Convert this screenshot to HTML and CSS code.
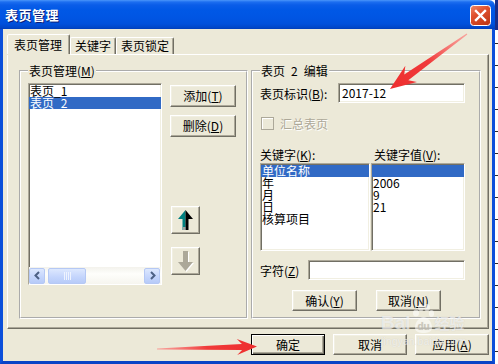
FILE: index.html
```html
<!DOCTYPE html>
<html lang="zh-CN">
<head>
<meta charset="utf-8">
<title>表页管理</title>
<link rel="stylesheet" href="styles.css">
</head>
<body>
<div class="screen">
  <div class="window">
    <div class="titlebar">
      <span class="title">表页管理</span>
      <span class="close">
        <svg width="21" height="21" viewBox="0 0 21 21">
          <defs>
            <linearGradient id="closeFill" x1="0" y1="0" x2="0.6" y2="1">
              <stop offset="0" stop-color="#F08A6A"/>
              <stop offset="0.45" stop-color="#E0512E"/>
              <stop offset="1" stop-color="#C23A17"/>
            </linearGradient>
          </defs>
          <rect x="0.5" y="0.5" width="20" height="20" rx="3" fill="url(#closeFill)" stroke="#fff"/>
          <path d="M6 6 L15 15 M15 6 L6 15" stroke="#fff" stroke-width="2.4" stroke-linecap="square"/>
        </svg>
      </span>
    </div>
    <div class="client">
      <div class="tabs">
        <div class="tab active">表页管理</div>
        <div class="tab">关键字</div>
        <div class="tab">表页锁定</div>
      </div>
      <div class="panel">
        <fieldset class="group group-left">
          <legend>表页管理(<u>M</u>)</legend>
          <div class="left-body">
            <div class="listbox sheets">
              <div class="items">
                <div class="item">表页_1</div>
                <div class="item sel">表页_2</div>
              </div>
              <div class="hscroll">
                <span class="sb-btn">
                  <svg width="9" height="9" viewBox="0 0 9 9"><path d="M6 1 L2.5 4.5 L6 8" fill="none" stroke="#4D6185" stroke-width="2"/></svg>
                </span>
                <span class="sb-thumb">
                  <svg width="9" height="8" viewBox="0 0 9 8"><path d="M1.5 0 V8 M3.5 0 V8 M5.5 0 V8 M7.5 0 V8" stroke="#EEF3FE" stroke-width="1"/></svg>
                </span>
                <span class="sb-track"></span>
                <span class="sb-btn">
                  <svg width="9" height="9" viewBox="0 0 9 9"><path d="M3 1 L6.5 4.5 L3 8" fill="none" stroke="#4D6185" stroke-width="2"/></svg>
                </span>
              </div>
            </div>
            <div class="side-buttons">
              <button class="btn btn-add">添加(<u>T</u>)</button>
              <button class="btn btn-del">删除(<u>D</u>)</button>
              <button class="btn btn-icon btn-up">
                <svg width="15" height="20" viewBox="0 0 15 20">
                  <polygon points="7.5,0 7.5,20 4.5,20 4.5,9 0,9" fill="#008080"/>
                  <polygon points="7.5,0 15,9 10.5,9 10.5,20 7.5,20" fill="#000"/>
                  <rect x="5" y="17" width="2.5" height="3" fill="#A0A0A0"/>
                </svg>
              </button>
              <button class="btn btn-icon btn-down">
                <svg width="16" height="21" viewBox="0 0 16 21">
                  <polygon points="6,1 11,1 11,12 16,12 8.5,21 1,12 6,12" fill="#fff"/>
                  <polygon points="5,0 10,0 10,11 15,11 7.5,20 0,11 5,11" fill="#ACA899"/>
                </svg>
              </button>
            </div>
          </div>
        </fieldset>

        <fieldset class="group group-right">
          <legend>表页&ensp;2&ensp;编辑</legend>
          <div class="row row-id">
            <span class="lbl lbl-id">表页标识(<u>B</u>):</span>
            <span class="field field-id">2017-12</span>
          </div>
          <div class="row row-check">
            <span class="checkbox"></span>
            <span class="disabled">汇总表页</span>
          </div>
          <div class="row row-heads">
            <span class="lbl lbl-key">关键字(<u>K</u>):</span>
            <span class="lbl">关键字值(<u>V</u>):</span>
          </div>
          <div class="row row-lists">
            <div class="listbox keys">
              <div class="item sel">单位名称</div>
              <div class="item">年</div>
              <div class="item">月</div>
              <div class="item">日</div>
              <div class="item">核算项目</div>
            </div>
            <div class="listbox values">
              <div class="item sel"></div>
              <div class="item">2006</div>
              <div class="item">9</div>
              <div class="item">21</div>
            </div>
          </div>
          <div class="row row-char">
            <span class="lbl lbl-char">字符(<u>Z</u>)</span>
            <span class="field field-char"></span>
          </div>
          <div class="row row-btns">
            <button class="btn btn-small">确认(<u>Y</u>)</button>
            <button class="btn btn-small">取消(<u>N</u>)</button>
          </div>
        </fieldset>
      </div>
      <div class="footer">
        <button class="btn btn-foot btn-default">确定</button>
        <button class="btn btn-foot">取消</button>
        <button class="btn btn-foot">应用(<u>A</u>)</button>
      </div>
    </div>
  </div>
  <div class="desk"></div>

  <div class="watermark">
    <div class="wm-logo">
      <span class="wm-bai">Bai</span>
      <svg class="wm-paw" width="22" height="30" viewBox="0 0 22 30">
        <ellipse cx="4" cy="9" rx="3" ry="3.6"/>
        <ellipse cx="9" cy="3.6" rx="3" ry="3.6"/>
        <ellipse cx="15" cy="3.6" rx="3" ry="3.6"/>
        <ellipse cx="19.5" cy="9.5" rx="2.6" ry="3.4"/>
        <path d="M3 24 C3 17 8 13 11.5 13 C15 13 20 17 20 24 C20 28 15 29 11.5 29 C8 29 3 28 3 24 Z"/>
        <text x="11.5" y="26" text-anchor="middle">du</text>
      </svg>
      <span class="wm-jy">经验</span>
    </div>
    <div class="wm-url">jingyan.baidu.com</div>
  </div>

  <svg class="marks" width="498" height="364" viewBox="0 0 498 364">
    <defs>
      <linearGradient id="arrowA" x1="467" y1="34" x2="390" y2="89" gradientUnits="userSpaceOnUse">
        <stop offset="0" stop-color="#F77" stop-opacity="0.6"/>
        <stop offset="0.5" stop-color="#F03A3A"/>
        <stop offset="1" stop-color="#EE2E2E"/>
      </linearGradient>
      <linearGradient id="arrowB" x1="157" y1="349" x2="257" y2="346" gradientUnits="userSpaceOnUse">
        <stop offset="0" stop-color="#F77" stop-opacity="0.6"/>
        <stop offset="0.5" stop-color="#F03A3A"/>
        <stop offset="1" stop-color="#EE2E2E"/>
      </linearGradient>
    </defs>
    <polygon fill="url(#arrowA)" points="466.65,33.51 404.25,74.53 405.35,65.75 390,89 416.97,82.03 408.31,80.23 467.35,34.49"/>
    <polygon fill="url(#arrowB)" points="157,348.4 241.93,343.9 236.8,339 257,346.5 237.2,355 242.07,349.9 157,349.6"/>
  </svg>
</div>
</body>
</html>
```

FILE: styles.css
```css
* {
  box-sizing: border-box;
}

body {
  margin: 0;
  width: 498px;
  height: 364px;
  overflow: hidden;
  font-family: "Noto Sans CJK SC", "Noto Sans", sans-serif;
  font-size: 12px;
  color: #000;
  background: #fff;
}

u {
  text-decoration: underline;
  text-underline-offset: 1px;
}

.screen {
  position: relative;
  display: flex;
  width: 498px;
  height: 364px;
}

/* ---------- window frame ---------- */
.window {
  width: 495px;
  height: 364px;
  display: flex;
  flex-direction: column;
}

.titlebar {
  flex: none;
  height: 29px;
  display: flex;
  align-items: center;
  justify-content: space-between;
  padding: 0 4px 0 5px;
  border-radius: 0 6px 0 0;
  background: linear-gradient(to bottom,
    #4A96FA 0px, #1C6EF0 2px, #0A5DE8 5px, #0058E6 10px,
    #0055E3 18px, #0050DB 24px, #0045C6 28px, #003CB6 29px);
}

.title {
  color: #fff;
  font-weight: bold;
  font-size: 13px;
  line-height: 14px;
  text-shadow: 1px 1px 0 #0A1E78;
  letter-spacing: 0.5px;
}

.close {
  display: flex;
  margin-top: 1px;
}

.client {
  flex: 1;
  display: flex;
  flex-direction: column;
  padding: 5px 0 0 4px;
  background: #ECE9D8;
  border: 3px solid #0B4FDA;
  border-top: 0;
  border-bottom-color: #0943C6;
}

.desk {
  width: 3px;
  height: 364px;
  background:
    linear-gradient(#1A2F8A, #1A2F8A) top / 3px 30px no-repeat,
    repeating-linear-gradient(to bottom, #fff 0 21px, #2A2A2A 21px 22px);
}

/* ---------- tabs ---------- */
.tabs {
  display: flex;
  align-items: flex-end;
  height: 20px;
}

.tab {
  height: 17px;
  line-height: 16px;
  padding: 0 4px;
  border: 1px solid;
  border-bottom: 0;
  border-color: #fff #716F64 transparent #fff;
  border-radius: 2px 2px 0 0;
  box-shadow: inset -1px 0 0 #ACA899;
  white-space: nowrap;
}

.tab.active {
  position: relative;
  z-index: 1;
  height: 20px;
  line-height: 19px;
  padding: 0 7px 0 6px;
  background: #ECE9D8;
  box-shadow: inset -1px 0 0 #ACA899, 0 1px 0 #ECE9D8;
}

.panel {
  width: 482px;
  height: 275px;
  display: flex;
  gap: 3px;
  padding: 10px 0 0 11px;
  border: 1px solid;
  border-color: #fff #716F64 #716F64 #fff;
  box-shadow: inset -1px -1px 0 #ACA899;
}

/* ---------- group boxes ---------- */
.group {
  margin: 0;
  height: 254px;
  min-width: 0;
  border: 2px groove #fff;
  padding: 6px 0 0 7px;
}

.group legend {
  padding: 0 1px;
  line-height: 12px;
  white-space: nowrap;
}

.group-left {
  width: 229px;
}

.group-right {
  width: 230px;
  padding-left: 7px;
}

.left-body {
  display: flex;
  gap: 8px;
  align-items: flex-start;
}

/* ---------- list boxes ---------- */
.listbox {
  background: #fff;
  border: 1px solid;
  border-color: #ACA899 #fff #fff #ACA899;
  box-shadow: inset 1px 1px 0 #716F64, inset -1px -1px 0 #F1EFE2;
  line-height: 12px;
  overflow: hidden;
}

.item {
  height: 12px;
  padding-left: 1px;
  white-space: nowrap;
}

.item.sel {
  background: #316AC5;
  color: #fff;
}

.sheets {
  width: 134px;
  height: 202px;
  display: flex;
  flex-direction: column;
}

.sheets .items {
  flex: 1;
  padding-top: 1px;
}

.hscroll {
  flex: none;
  height: 17px;
  display: flex;
  align-items: center;
  gap: 2px;
  padding: 0 1px 0 0;
  background: linear-gradient(to bottom, #F3F2EC, #FEFEFB 40%, #F6F5EF);
}

.sb-btn,
.sb-thumb {
  height: 16px;
  display: flex;
  align-items: center;
  justify-content: center;
  border: 1px solid #B5C8F4;
  border-radius: 2px;
  background: linear-gradient(to bottom, #DDE8FE, #C3D4FC 60%, #B7CBF8);
}

.sb-btn {
  width: 16px;
}

.sb-thumb {
  width: 38px;
  margin-left: 1px;
}

.sb-track {
  flex: 1;
}

/* ---------- buttons ---------- */
.btn {
  margin: 0;
  padding: 0;
  font: inherit;
  color: #000;
  line-height: 12px;
  background: #ECE9D8;
  border: 1px solid;
  border-color: #fff #716F64 #716F64 #fff;
  box-shadow: inset -1px -1px 0 #ACA899, inset 1px 1px 0 #F1EFE2;
  border-radius: 0;
  white-space: nowrap;
}

.side-buttons {
  display: flex;
  flex-direction: column;
  align-items: flex-start;
}

.btn-add,
.btn-del {
  width: 66px;
  height: 22px;
}

.btn-add {
  margin-top: 2px;
}

.btn-del {
  margin-top: 8px;
}

.btn-icon {
  width: 29px;
  height: 28px;
  margin-left: 1px;
  display: flex;
  align-items: center;
  justify-content: center;
}

.btn-up {
  margin-top: 69px;
}

.btn-down {
  margin-top: 13px;
}

.btn-small {
  width: 65px;
  height: 21px;
}

.btn-foot {
  width: 74px;
  height: 21px;
}

.btn-default {
  border-color: #000;
  box-shadow: inset 1px 1px 0 #fff, inset -1px -1px 0 #716F64, inset -2px -2px 0 #ACA899;
}

/* ---------- right group rows ---------- */
.row {
  display: flex;
  align-items: center;
  white-space: nowrap;
}

.field {
  height: 20px;
  line-height: 18px;
  padding-left: 3px;
  background: #fff;
  border: 1px solid;
  border-color: #ACA899 #fff #fff #ACA899;
  box-shadow: inset 1px 1px 0 #716F64, inset -1px -1px 0 #F1EFE2;
}

.row-id {
  height: 20px;
}

.lbl-id {
  width: 78px;
}

.field-id {
  width: 127px;
}

.row-check {
  margin-top: 14px;
  height: 13px;
  gap: 6px;
  padding-left: 1px;
}

.checkbox {
  width: 13px;
  height: 13px;
  border: 1px solid #ACA899;
  box-shadow: inset 1px 1px 0 #fff;
  background: #ECE9D8;
}

.disabled {
  color: #ACA899;
  text-shadow: 1px 1px 0 #fff;
  line-height: 13px;
}

.row-heads {
  margin-top: 19px;
  height: 12px;
  line-height: 12px;
}

.lbl-key {
  width: 114px;
}

.row-lists {
  margin-top: 2px;
  height: 88px;
  align-items: stretch;
  gap: 1px;
}

.keys {
  width: 110px;
  padding-top: 1px;
}

.values {
  width: 94px;
  padding-top: 1px;
}

.row-char {
  margin-top: 9px;
  height: 20px;
}

.lbl-char {
  width: 48px;
}

.field-char {
  width: 157px;
}

.row-btns {
  margin-top: 10px;
  padding-left: 32px;
  gap: 19px;
}

/* ---------- footer ---------- */
.footer {
  display: flex;
  justify-content: flex-end;
  gap: 8px;
  margin-top: 5px;
  padding-right: 3px;
}

/* ---------- overlays ---------- */
.watermark {
  position: absolute;
  left: 381px;
  top: 300px;
  color: rgba(255, 255, 255, 0.62);
  text-shadow: 0 0 1px rgba(150, 150, 150, 0.35);
  pointer-events: none;
}

.wm-logo {
  display: flex;
  align-items: flex-end;
  gap: 1px;
  height: 34px;
}

.wm-bai {
  font-family: "Liberation Sans", sans-serif;
  font-weight: bold;
  font-size: 19px;
  line-height: 20px;
  margin-bottom: 1px;
}

.wm-paw {
  fill: rgba(255, 255, 255, 0.55);
}

.wm-paw text {
  font-family: "Liberation Sans", sans-serif;
  font-weight: bold;
  font-size: 10px;
  fill: rgba(190, 185, 170, 0.7);
}

.wm-jy {
  font-weight: bold;
  font-size: 15px;
  line-height: 20px;
  margin-bottom: 1px;
}

.wm-url {
  font-family: "Liberation Sans", sans-serif;
  font-size: 10px;
  line-height: 11px;
  margin-top: 2px;
  letter-spacing: 0.3px;
}

.marks {
  position: absolute;
  left: 0;
  top: 0;
  pointer-events: none;
}
```
